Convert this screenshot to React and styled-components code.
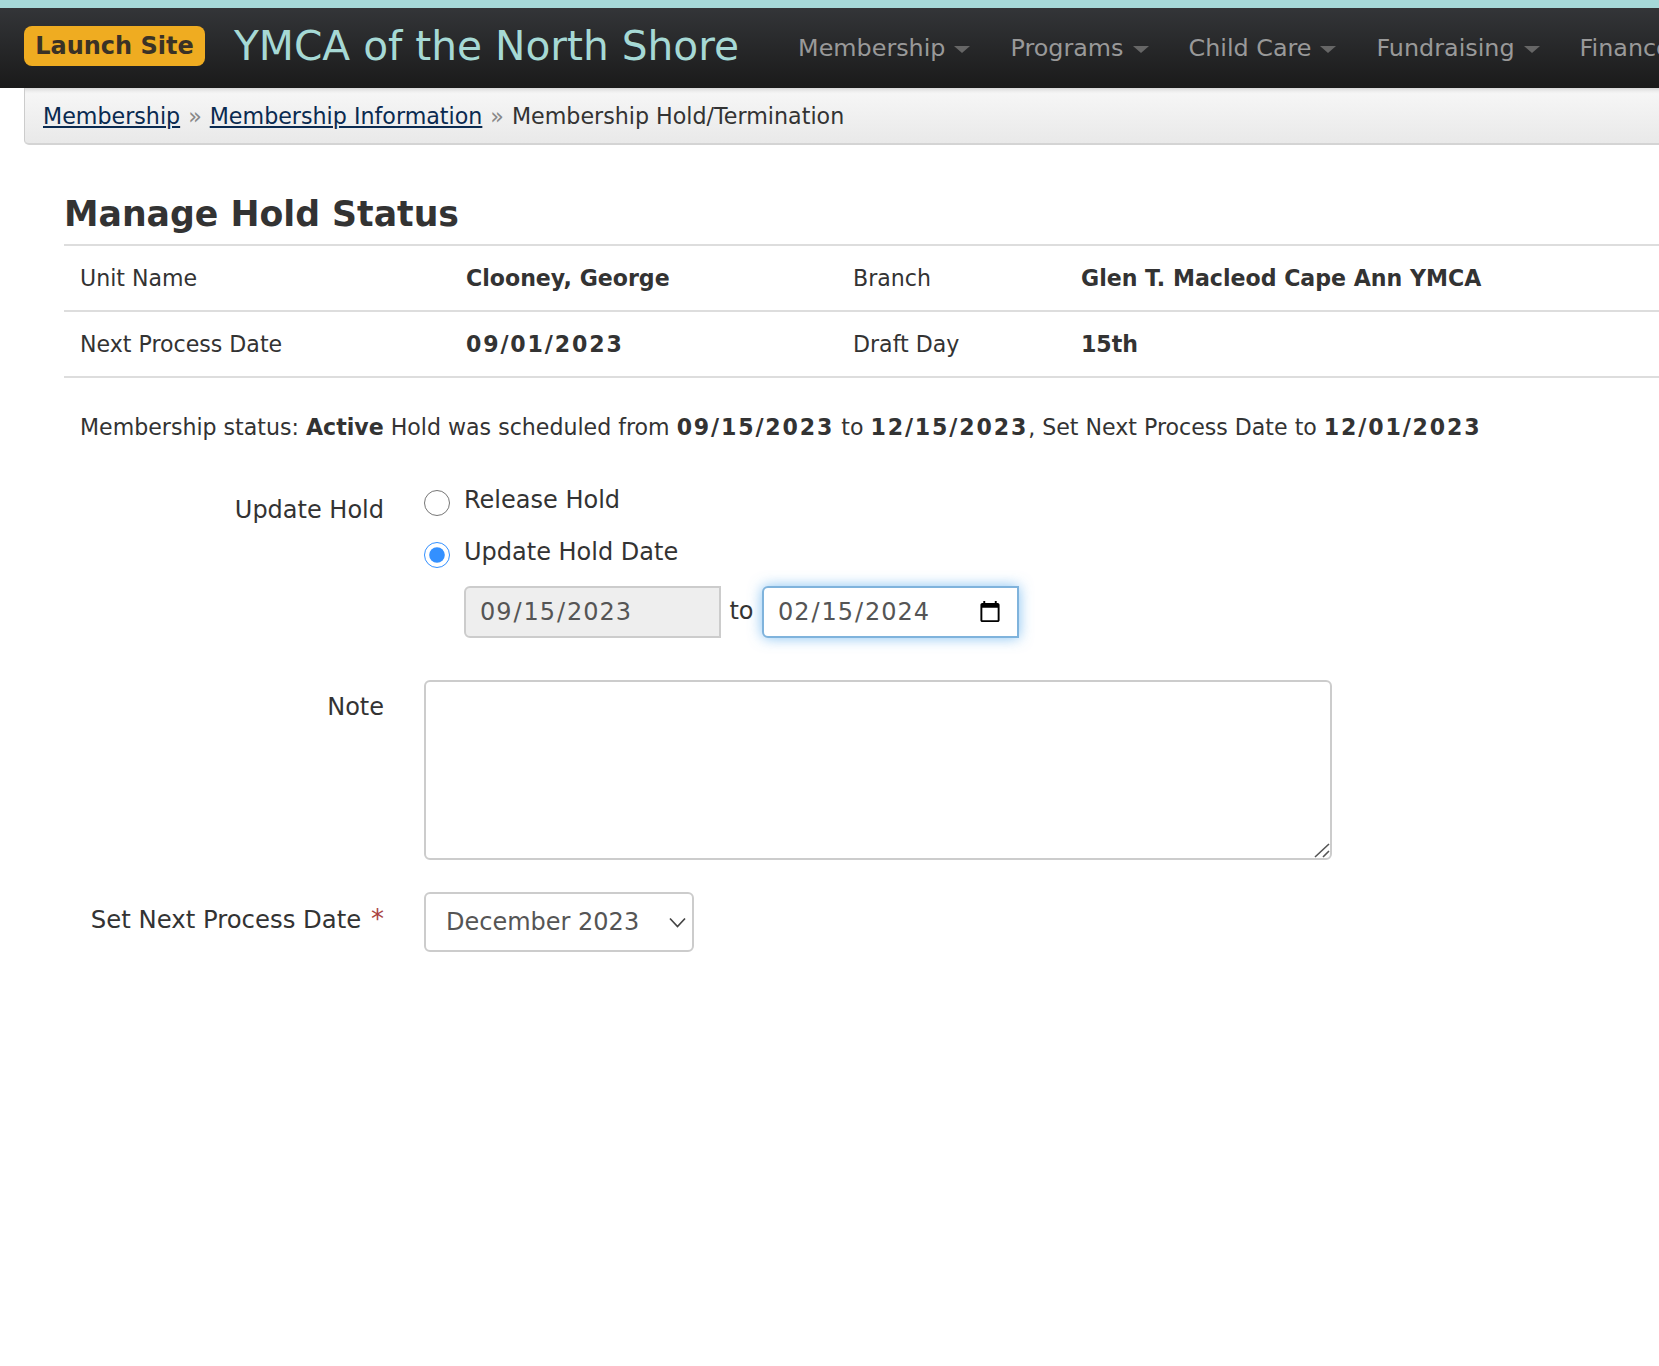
import styled, { createGlobalStyle } from "styled-components";

const GlobalStyle = createGlobalStyle`
    html, body {
        margin: 0;
        padding: 0;
        background: #fff;
        overflow-x: hidden;
    }
    body {
        font-family: "DejaVu Sans", Verdana, sans-serif;
        color: #333;
        font-size: 22.1px;
    }
`;

const Page = styled.div`
    width: 1659px;
    height: 1366px;
    overflow: hidden;
`;

const NavBar = styled.header`
    display: flex;
    align-items: center;
    height: 80px;
    padding-left: 24px;
    border-top: 8px solid #a6d9d9;
    background: linear-gradient(#333538, #1a1a1a);
    white-space: nowrap;
    overflow: hidden;
`;

const LaunchButton = styled.a`
    display: flex;
    flex: none;
    align-items: center;
    justify-content: center;
    width: 181px;
    height: 40px;
    margin-top: -4px;
    border-radius: 8px;
    background: #efac21;
    color: #3a3226;
    font-size: 24px;
    font-weight: 700;
`;

const Brand = styled.a`
    flex: none;
    margin: -4px 0 0 29px;
    color: #a6d9d5;
    font-size: 40.7px;
`;

const Menu = styled.nav`
    display: flex;
    flex: none;
    margin-left: 59px;
    gap: 40px;
`;

const MenuItem = styled.a`
    display: flex;
    align-items: center;
    color: #999;
    font-size: 23.85px;

    &::after {
        content: "";
        display: ${props => (props.$caret ? "block" : "none")};
        margin: 2px 0 0 9px;
        border-top: 7px solid #666;
        border-left: 8px solid transparent;
        border-right: 8px solid transparent;
    }
`;

const Breadcrumb = styled.div`
    display: flex;
    align-items: center;
    gap: 8px;
    height: 55px;
    margin-left: 24px;
    padding-left: 18px;
    border-left: 1px solid #ccc;
    border-bottom: 2px solid #d4d4d4;
    border-bottom-left-radius: 5px;
    background: linear-gradient(#f7f7f7, #e9e9e9);
    box-shadow: inset 0 6px 5px -5px rgba(0, 0, 0, 0.2);
    font-size: 22.2px;
`;

const Crumb = styled.a`
    color: #0a2a50;
    text-decoration: underline;
`;

const Separator = styled.span`
    color: #888;
`;

const Content = styled.main`
    padding: 44px 0 0 64px;
`;

const Heading = styled.h1`
    margin: 0 0 5px 0;
    color: #333;
    font-size: 34.7px;
    line-height: 50px;
    font-weight: 700;
`;

const InfoTable = styled.div`
    display: grid;
    grid-template-columns: 386px 387px 228px 1fr;
    border-top: 2px solid #ddd;
`;

const InfoCell = styled.div`
    display: flex;
    align-items: center;
    height: 64px;
    padding-left: 16px;
    border-bottom: 2px solid #ddd;
    font-weight: ${props => (props.$strong ? 700 : 400)};
`;

const BoldDate = styled.b`
    font-weight: 700;
    letter-spacing: 1.85px;
`;

const StatusLine = styled.p`
    margin: 34px 0 43px 16px;
    line-height: 30px;
    white-space: nowrap;
`;

const FormRow = styled.div`
    display: grid;
    grid-template-columns: 320px 1fr;
    column-gap: 40px;
    margin-bottom: ${props => props.$gap || 0}px;
`;

const FieldLabel = styled.label`
    padding-top: ${props => props.$top || 0}px;
    text-align: right;
    font-size: ${props => props.$size || 24}px;
    line-height: 30px;
    white-space: nowrap;
`;

const Required = styled.span`
    margin-left: 2px;
    color: #a94442;
    font-size: 26px;
`;

const RadioRow = styled.label`
    display: flex;
    align-items: flex-start;
    gap: 14px;
    height: ${props => props.$height}px;
    font-size: 24px;
    line-height: 30px;
`;

const Radio = styled.input`
    width: 26px;
    height: 26px;
    margin: 5px 0 0;
    accent-color: #3390ff;
`;

const DateRow = styled.div`
    display: flex;
    align-items: center;
    margin-left: 40px;
    font-size: 24px;
`;

const DateInput = styled.input`
    box-sizing: border-box;
    width: 257px;
    height: 52px;
    padding: 0 13px;
    border: 2px solid ${props => (props.$focused ? "#7fb3dc" : "#ccc")};
    border-radius: 6px 0 0 6px;
    background: ${props => (props.$focused ? "#fff" : "#eee")};
    box-shadow: ${props => (props.$focused ? "0 0 14px rgba(82, 168, 236, 0.7)" : "none")};
    color: #555;
    font-family: inherit;
    font-size: 24px;
    letter-spacing: 0.95px;
    outline: none;
`;

const ToLabel = styled.span`
    width: 41px;
    margin-top: -3px;
    text-align: center;
`;

const NoteBox = styled.div`
    position: relative;
    width: 908px;
    height: 180px;
`;

const NoteArea = styled.textarea`
    display: block;
    box-sizing: border-box;
    width: 100%;
    height: 100%;
    border: 2px solid #ccc;
    border-radius: 6px;
    outline: none;
    resize: none;
`;

const ResizeGrip = styled.svg`
    position: absolute;
    right: 2px;
    bottom: 2px;
    width: 16px;
    height: 16px;
    pointer-events: none;
`;

const SelectBox = styled.div`
    position: relative;
    width: 270px;
    height: 60px;
`;

const MonthSelect = styled.select`
    box-sizing: border-box;
    width: 100%;
    height: 100%;
    padding-left: 20px;
    border: 2px solid #ccc;
    border-radius: 6px;
    background: #fff;
    color: #555;
    font-family: inherit;
    font-size: 24px;
    appearance: none;
    outline: none;
`;

const SelectArrow = styled.svg`
    position: absolute;
    top: 25px;
    right: 8px;
    width: 17px;
    height: 11px;
    pointer-events: none;
`;

const menu = ["Membership", "Programs", "Child Care", "Fundraising"];

const App = () => {
    return (
        <Page>
            <GlobalStyle />
            <NavBar>
                <LaunchButton>Launch Site</LaunchButton>
                <Brand>YMCA of the North Shore</Brand>
                <Menu>
                    {menu.map(item => (
                        <MenuItem key={item} $caret>{item}</MenuItem>
                    ))}
                    <MenuItem>Finances</MenuItem>
                </Menu>
            </NavBar>
            <Breadcrumb>
                <Crumb>Membership</Crumb>
                <Separator>»</Separator>
                <Crumb>Membership Information</Crumb>
                <Separator>»</Separator>
                <span>Membership Hold/Termination</span>
            </Breadcrumb>
            <Content>
                <Heading>Manage Hold Status</Heading>
                <InfoTable>
                    <InfoCell>Unit Name</InfoCell>
                    <InfoCell $strong>Clooney, George</InfoCell>
                    <InfoCell>Branch</InfoCell>
                    <InfoCell $strong>Glen T. Macleod Cape Ann YMCA</InfoCell>
                    <InfoCell>Next Process Date</InfoCell>
                    <InfoCell><BoldDate>09/01/2023</BoldDate></InfoCell>
                    <InfoCell>Draft Day</InfoCell>
                    <InfoCell $strong>15th</InfoCell>
                </InfoTable>
                <StatusLine>
                    Membership status: <b>Active</b> Hold was scheduled from <BoldDate>09/15/2023</BoldDate> to <BoldDate>12/15/2023</BoldDate>, Set Next Process Date to <BoldDate>12/01/2023</BoldDate>
                </StatusLine>
                <FormRow $gap={42}>
                    <FieldLabel $top={10}>Update Hold</FieldLabel>
                    <div>
                        <RadioRow $height={52}>
                            <Radio type="radio" name="hold" />
                            Release Hold
                        </RadioRow>
                        <RadioRow $height={49}>
                            <Radio type="radio" name="hold" defaultChecked />
                            Update Hold Date
                        </RadioRow>
                        <DateRow>
                            <DateInput type="date" defaultValue="2023-09-15" disabled />
                            <ToLabel>to</ToLabel>
                            <DateInput type="date" defaultValue="2024-02-15" $focused />
                        </DateRow>
                    </div>
                </FormRow>
                <FormRow $gap={32}>
                    <FieldLabel $top={12}>Note</FieldLabel>
                    <NoteBox>
                        <NoteArea />
                        <ResizeGrip viewBox="0 0 16 16">
                            <path d="M1 15 L15 2 M9 15 L15 9" stroke="#555" strokeWidth="1.6" fill="none" />
                        </ResizeGrip>
                    </NoteBox>
                </FormRow>
                <FormRow>
                    <FieldLabel $top={12} $size={24.35}>Set Next Process Date <Required>*</Required></FieldLabel>
                    <SelectBox>
                        <MonthSelect defaultValue="December 2023">
                            <option>December 2023</option>
                        </MonthSelect>
                        <SelectArrow viewBox="0 0 17 11">
                            <path d="M1 1.5 L8.5 9.5 L16 1.5" stroke="#444" strokeWidth="1.7" fill="none" />
                        </SelectArrow>
                    </SelectBox>
                </FormRow>
            </Content>
        </Page>
    );
};

export default App;
